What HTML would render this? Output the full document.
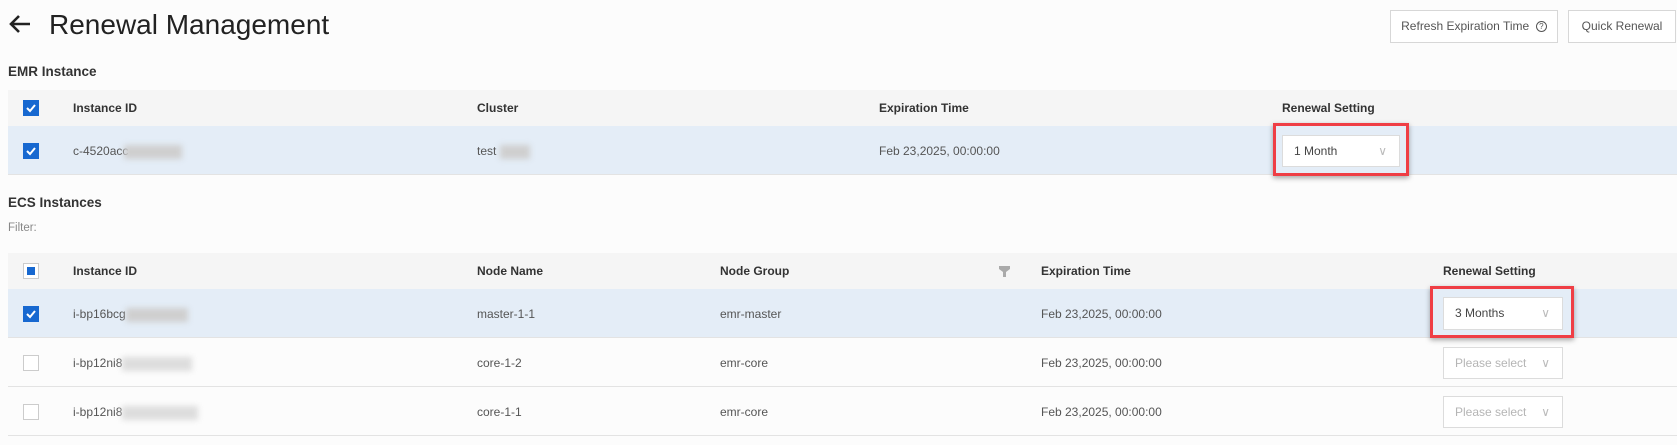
<!DOCTYPE html>
<html><head><meta charset="utf-8"><style>
*{margin:0;padding:0;box-sizing:border-box}
body{width:1677px;height:445px;background:#fcfcfc;font-family:"Liberation Sans",sans-serif;color:#333;position:relative;overflow:hidden}
.a{position:absolute;white-space:nowrap}
.title{left:49px;top:9px;font-size:28px;color:#222}
.btn{border:1px solid #d7d7d7;background:#fff;height:33px;top:10px;font-size:12px;color:#555;line-height:31px;text-align:center}
.sec{font-size:13.5px;font-weight:bold;color:#333}
.hdr{left:8px;right:0;background:#f5f5f5}
.row{left:8px;right:0;border-bottom:1px solid #e3e3e3}
.sel{background:#e4edf7}
.th{font-size:12px;font-weight:bold;color:#333}
.td{font-size:12px;color:#555}
.cb{width:16px;height:16px;left:23px;border:1px solid #ccc;background:#fff}
.cb.on{background:#1768d0;border-color:#1768d0}
.blur{background:#cfcfcf;filter:blur(3px);height:14px}
.red{border:3px solid #ef3e45;box-shadow:0 2px 5px rgba(0,0,0,.35)}
.dd{background:#fff;border:1px solid #dcdcdc;font-size:12px;color:#444;padding-left:11px}
.ph{color:#b5b5b5}
</style></head><body>
<svg class="a" style="left:8px;top:14px" width="24" height="20" viewBox="0 0 24 20"><path d="M22 10H3M11 2L3 10l8 8" stroke="#222" stroke-width="2.6" fill="none"/></svg>
<div class="a title">Renewal Management</div>
<div class="a btn" style="left:1390px;width:168px">Refresh Expiration Time &nbsp;<span style="display:inline-block;width:11px;height:11px;border:1px solid #555;border-radius:50%;font-size:8px;line-height:9px;vertical-align:middle">?</span></div>
<div class="a btn" style="left:1568px;width:108px">Quick Renewal</div>

<div class="a sec" style="left:8px;top:64px">EMR Instance</div>
<div class="a hdr" style="top:90px;height:36px"></div>
<div class="a row sel" style="top:126px;height:49px"></div>
<div class="a cb on" style="top:100px"><svg width="14" height="14" viewBox="0 0 14 14"><path d="M3 7l3 3 5-6" stroke="#fff" stroke-width="2" fill="none"/></svg></div>
<div class="a th" style="left:73px;top:101px">Instance ID</div>
<div class="a th" style="left:477px;top:101px">Cluster</div>
<div class="a th" style="left:879px;top:101px">Expiration Time</div>
<div class="a th" style="left:1282px;top:101px">Renewal Setting</div>
<div class="a cb on" style="top:143px"><svg width="14" height="14" viewBox="0 0 14 14"><path d="M3 7l3 3 5-6" stroke="#fff" stroke-width="2" fill="none"/></svg></div>
<div class="a td" style="left:73px;top:144px">c-4520acc</div>
<div class="a blur" style="left:124px;top:145px;width:58px"></div>
<div class="a td" style="left:477px;top:144px">test</div>
<div class="a blur" style="left:500px;top:145px;width:30px"></div>
<div class="a td" style="left:879px;top:144px">Feb 23,2025, 00:00:00</div>
<div class="a red" style="left:1273px;top:123px;width:136px;height:53px"></div>
<div class="a dd" style="left:1282px;top:135px;width:118px;height:32px;line-height:30px">1 Month<span style="position:absolute;right:12px;color:#bbb">&#8744;</span></div>

<div class="a sec" style="left:8px;top:195px">ECS Instances</div>
<div class="a td" style="left:8px;top:222px;font-size:11.5px;color:#888">Filter:</div>
<div class="a hdr" style="top:253px;height:36px"></div>
<div class="a row sel" style="top:289px;height:49px"></div>
<div class="a row" style="top:338px;height:49px"></div>
<div class="a row" style="top:387px;height:49px"></div>
<div class="a cb" style="top:263px"><div style="width:8px;height:8px;background:#1768d0;margin:3px"></div></div>
<div class="a th" style="left:73px;top:264px">Instance ID</div>
<div class="a th" style="left:477px;top:264px">Node Name</div>
<div class="a th" style="left:720px;top:264px">Node Group</div>
<svg class="a" style="left:999px;top:266px" width="11" height="11" viewBox="0 0 11 11"><path d="M0 0h11v3L7 6v5H4V6L0 3z" fill="#aaa"/></svg>
<div class="a th" style="left:1041px;top:264px">Expiration Time</div>
<div class="a th" style="left:1443px;top:264px">Renewal Setting</div>

<div class="a cb on" style="top:306px"><svg width="14" height="14" viewBox="0 0 14 14"><path d="M3 7l3 3 5-6" stroke="#fff" stroke-width="2" fill="none"/></svg></div>
<div class="a td" style="left:73px;top:307px">i-bp16bcg</div>
<div class="a blur" style="left:126px;top:308px;width:62px"></div>
<div class="a td" style="left:477px;top:307px">master-1-1</div>
<div class="a td" style="left:720px;top:307px">emr-master</div>
<div class="a td" style="left:1041px;top:307px">Feb 23,2025, 00:00:00</div>
<div class="a red" style="left:1430px;top:286px;width:144px;height:52px"></div>
<div class="a dd" style="left:1443px;top:297px;width:120px;height:33px;line-height:31px">3 Months<span style="position:absolute;right:12px;color:#bbb">&#8744;</span></div>

<div class="a cb" style="top:355px"></div>
<div class="a td" style="left:73px;top:356px">i-bp12ni8</div>
<div class="a blur" style="left:122px;top:357px;width:70px;background:#ddd"></div>
<div class="a td" style="left:477px;top:356px">core-1-2</div>
<div class="a td" style="left:720px;top:356px">emr-core</div>
<div class="a td" style="left:1041px;top:356px">Feb 23,2025, 00:00:00</div>
<div class="a dd ph" style="left:1443px;top:347px;width:120px;height:32px;line-height:30px">Please select<span style="position:absolute;right:12px;color:#bbb">&#8744;</span></div>

<div class="a cb" style="top:404px"></div>
<div class="a td" style="left:73px;top:405px">i-bp12ni8</div>
<div class="a blur" style="left:122px;top:406px;width:76px;background:#ddd"></div>
<div class="a td" style="left:477px;top:405px">core-1-1</div>
<div class="a td" style="left:720px;top:405px">emr-core</div>
<div class="a td" style="left:1041px;top:405px">Feb 23,2025, 00:00:00</div>
<div class="a dd ph" style="left:1443px;top:396px;width:120px;height:32px;line-height:30px">Please select<span style="position:absolute;right:12px;color:#bbb">&#8744;</span></div>
</body></html>
